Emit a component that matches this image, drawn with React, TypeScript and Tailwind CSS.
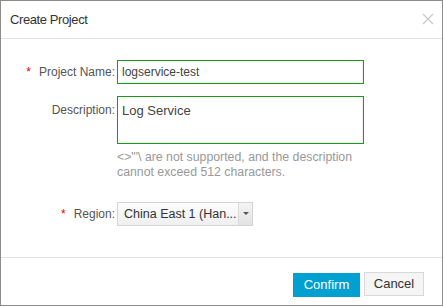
import React from "react";

export default function App() {
  const font = { fontFamily: '"Liberation Sans", Arial, sans-serif' };
  return (
    <div
      className="w-[443px] h-[306px] bg-white border border-[#8c8c8c] flex flex-col text-[12px] text-[#333]"
      style={font}
    >
      <div className="h-[38px] shrink-0 border-b border-[#e3e3e3] flex items-center justify-between pl-[9px] pr-[8px]">
        <span className="text-[13px] text-[#333] tracking-[-0.4px]">Create Project</span>
        <svg width="12" height="12" viewBox="0 0 12 12" className="mt-[-1px]">
          <path d="M1 1 L11 11 M11 1 L1 11" stroke="#c8c8c8" strokeWidth="1.2" />
        </svg>
      </div>
      <div className="flex-1 flex flex-col pt-[21px]">
        <div className="flex items-center">
          <div className="w-[115px] shrink-0 flex justify-end items-center pr-[1px] text-[#555]">
            <span className="text-[#e00] mr-[8px] text-[12px]">*</span>
            <span>Project Name:</span>
          </div>
          <div className="ml-[1px] w-[247px] h-[24px] border border-[#1a991a] flex items-center pl-[4px] text-[#444] shadow-[inset_-1px_-1px_1px_rgba(0,0,0,0.06)]">
            logservice-test
          </div>
        </div>
        <div className="flex mt-[12px]">
          <div className="w-[115px] shrink-0 flex justify-end pr-[1px] pt-[5px] text-[#555]">
            <span>Description:</span>
          </div>
          <div className="flex flex-col ml-[1px]">
            <div className="w-[247px] h-[48px] border border-[#1a991a] pl-[4px] pt-[6px] text-[13px] text-[#444] leading-[15px] shadow-[inset_-1px_-1px_1px_rgba(0,0,0,0.06)]">
              Log Service
            </div>
            <div className="text-[#999] text-[12.3px] leading-[15px] mt-[6px] w-[260px]">
              {"<>\"'\\ are not supported, and the description"}
              <br />
              cannot exceed 512 characters.
            </div>
          </div>
        </div>
        <div className="flex items-center mt-[22px]">
          <div className="w-[115px] shrink-0 flex justify-end items-center pr-[1px] text-[#555]">
            <span className="text-[#e00] mr-[8px]">*</span>
            <span>Region:</span>
          </div>
          <div className="ml-[1px] w-[136px] h-[24px] border border-[#d4d4d4] flex bg-gradient-to-b from-[#fdfdfd] to-[#efefef]">
            <div className="flex-1 flex items-center pl-[6px] text-[#333] text-[12.5px]">China East 1 (Han...</div>
            <div className="w-[14px] border-l border-[#dcdcdc] flex items-center justify-center bg-gradient-to-b from-[#f4f4f4] to-[#e2e2e2]">
              <svg width="6" height="4" viewBox="0 0 6 4">
                <path d="M0 0 L6 0 L3 3 Z" fill="#555" />
              </svg>
            </div>
          </div>
        </div>
      </div>
      <div className="h-[48px] shrink-0 border-t border-[#e3e3e3] flex items-start justify-end pr-[18px] pt-[14px] gap-[4px]">
        <div className="w-[67px] h-[24px] mt-[1px] bg-[#00a0d0] text-white flex items-center justify-center text-[13px]">
          Confirm
        </div>
        <div className="w-[60px] h-[24px] bg-[#f5f5f5] border border-[#d9d9d9] text-[#333] flex items-center justify-center text-[13px]">
          Cancel
        </div>
      </div>
    </div>
  );
}
